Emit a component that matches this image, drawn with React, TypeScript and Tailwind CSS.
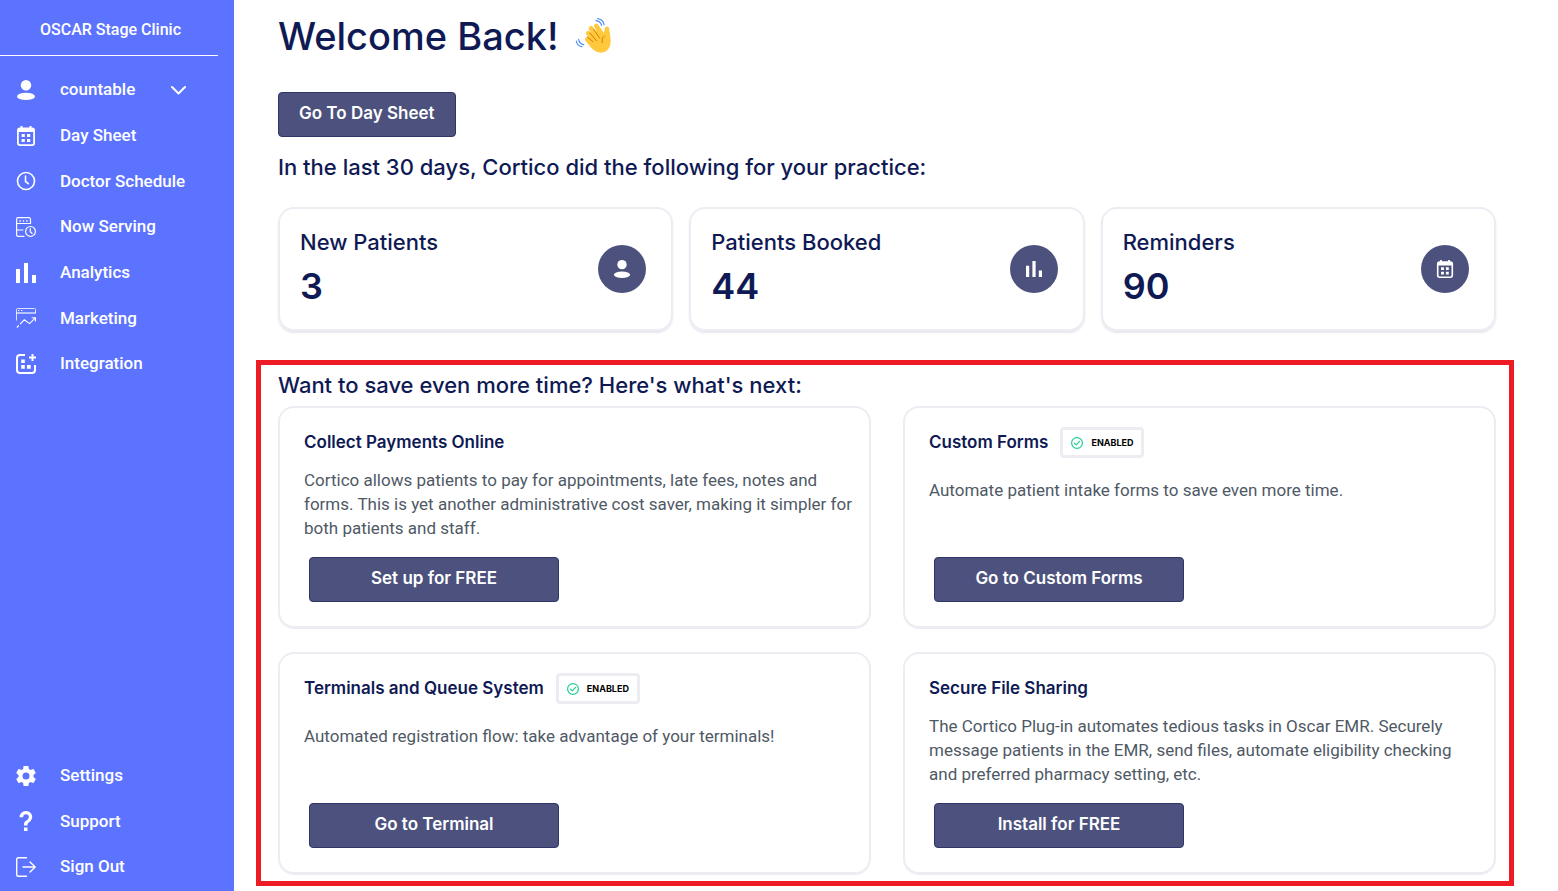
import { ReactNode } from "react"

const PersonIcon = ({ className }: { className: string }) => (
    <svg className={className} viewBox="0 0 20 20" fill="currentColor" aria-hidden="true">
        <circle cx="10" cy="5.2" r="5.2" />
        <ellipse cx="10" cy="16.4" rx="9" ry="3.6" />
    </svg>
)

const CalendarIcon = ({ className }: { className: string }) => (
    <svg className={className} viewBox="0 0 20 20" fill="currentColor" aria-hidden="true">
        <path
            fillRule="evenodd"
            d="M4.500 0h2v1.400h7V0h2v1.400h.500A3 3 0 0 1 19 4.400V17a3 3 0 0 1-3 3H4a3 3 0 0 1-3-3V4.400A3 3 0 0 1 4 1.400h.500zM2.800 6v11a1.300 1.300 0 0 0 1.300 1.300h11.800a1.300 1.300 0 0 0 1.300-1.300V6z"
        />
        <path d="M5.600 8h3.200v3H5.600zM11 8h3.200v3H11zM5.600 13h3.200v3H5.600zM11 13h3.200v3H11z" />
    </svg>
)

const BarsIcon = ({ className }: { className: string }) => (
    <svg className={className} viewBox="0 0 20 20" fill="currentColor" aria-hidden="true">
        <path d="M0 6h4v14H0zM8 0h4v20H8zM16 12h4v8h-4z" />
    </svg>
)

const ClockIcon = ({ className }: { className: string }) => (
    <svg className={className} viewBox="0 0 20 20" fill="none" stroke="currentColor" strokeWidth="1.600" strokeLinecap="round" strokeLinejoin="round" aria-hidden="true">
        <circle cx="10" cy="10" r="8.500" />
        <path d="M9.500 5v5.500l2.800 2.200" />
    </svg>
)

const ServingIcon = ({ className }: { className: string }) => (
    <svg className={className} viewBox="0 0 20 20" fill="none" stroke="currentColor" strokeWidth="1.200" strokeLinecap="round" aria-hidden="true">
        <path d="M14.500 6.500V2.200A1.700 1.700 0 0 0 12.800.600H2.200A1.700 1.700 0 0 0 .600 2.200v15.500a1.700 1.700 0 0 0 1.600 1.700H8M.600 6.500h13.900M.600 13H7" />
        <path d="M3.400 3.900h1.400M6.800 3.900h1.400M10.200 3.900h1.400" strokeWidth="1.500" strokeLinecap="butt" />
        <circle cx="14.500" cy="14.400" r="4.900" />
        <path d="M14.300 11.500v3.200l1.700 1.600" />
    </svg>
)

const MarketingIcon = ({ className }: { className: string }) => (
    <svg className={className} viewBox="0 0 20 20" fill="none" stroke="currentColor" strokeWidth="0.800" aria-hidden="true">
        <path d="M.500 12.500V1.500a1 1 0 0 1 1-1h17a1 1 0 0 1 1 1v4" />
        <path d="M.500 5.500h19M.500 4.500h19" opacity="0.700" />
        <path d="M2 2.500h1.300M5 2.500h1.300" strokeWidth="1" />
        <path d="m.800 19.500 2-2M4 16.200l4.300-4.400 5.300 3.800 5.700-5.700M15.700 9.700h3.700v3.800" strokeWidth="1.100" />
    </svg>
)

const IntegrationIcon = ({ className }: { className: string }) => (
    <svg className={className} viewBox="0 0 20 20" fill="none" stroke="currentColor" strokeWidth="2" aria-hidden="true">
        <path d="M9 1H4a3 3 0 0 0-3 3v12a3 3 0 0 0 3 3h12a3 3 0 0 0 3-3v-5" />
        <path d="M16.500 0v7M13 3.500h7" />
        <path fill="currentColor" stroke="none" d="M5.200 5.500h3.600v3.600H5.200zM5.200 11h3.600v3.700H5.200zM11 11h3.700v3.700H11z" />
    </svg>
)

const SettingsIcon = ({ className }: { className: string }) => (
    <svg className={className} viewBox="2 2 20 20" fill="currentColor" aria-hidden="true">
        <path d="M12 15.500A3.500 3.500 0 0 1 8.500 12 3.500 3.500 0 0 1 12 8.500a3.500 3.500 0 0 1 3.500 3.500 3.500 3.500 0 0 1-3.500 3.500m7.430-2.530c.040-.320.070-.640.070-.970s-.030-.660-.070-1l2.110-1.630c.190-.150.240-.420.120-.640l-2-3.460c-.120-.220-.390-.310-.610-.220l-2.490 1c-.520-.390-1.060-.730-1.690-.980l-.370-2.650A.506.506 0 0 0 14 2h-4c-.250 0-.460.180-.500.420l-.370 2.650c-.630.250-1.170.590-1.690.980l-2.490-1c-.220-.090-.490 0-.610.220l-2 3.460c-.130.220-.070.490.120.640L4.570 11c-.040.340-.070.670-.070 1s.030.650.070.970l-2.110 1.660c-.190.150-.250.420-.120.640l2 3.460c.120.220.390.300.610.220l2.490-1.010c.520.400 1.060.740 1.690.990l.370 2.650c.040.240.250.420.500.420h4c.250 0 .460-.180.500-.420l.370-2.650c.630-.260 1.170-.590 1.690-.990l2.490 1.010c.220.080.490 0 .610-.220l2-3.460c.120-.220.070-.490-.120-.640z" />
    </svg>
)

const HelpIcon = ({ className }: { className: string }) => (
    <svg className={className} viewBox="2 2 20 20" fill="currentColor" aria-hidden="true">
        <path d="M10 18.500h3.500V22H10zM12 2c5.350.220 8 5.620 4.800 9.670-.830 1-2.170 1.660-2.830 2.500-.470.830-.470 1.330-.470 2.330H10c0-1.670 0-2.580.670-3.580.660-1 2-1.590 2.830-2.250C15.920 8.430 15.020 5.560 12 5.300A2.800 2.800 0 0 0 9.200 8.200H5.500A6.300 6.300 0 0 1 12 2" />
    </svg>
)

const SignOutIcon = ({ className }: { className: string }) => (
    <svg className={className} viewBox="0 0 20 20" fill="none" stroke="currentColor" strokeWidth="1.400" strokeLinecap="round" strokeLinejoin="round" aria-hidden="true">
        <path d="M10.500.700H2.200A1.500 1.500 0 0 0 .700 2.200v15.600a1.500 1.500 0 0 0 1.500 1.500h8.300" />
        <path d="M7 10h12M14 5l5.200 5-5.200 5" />
    </svg>
)

const WavingHand = () => (
    <svg className="size-11" viewBox="0 0 132 132" fill="none" strokeLinecap="round" role="img" aria-label="Waving hand">
        <g stroke="#ffc83d" strokeWidth="14">
            <path d="M73 36l24 38M57 43l26 38M49 58l26 30M46 76l24 22" />
            <path d="M105 45c-3 8-3 16-1 26" />
        </g>
        <path d="M98 62l14-14c3 18 5 32 3 42-2 16-14 26-29 26-10 0-20-6-30-16L41 80l30-30 14-8z" fill="#ffc83d" />
        <g stroke="#d67d00" strokeWidth="3">
            <path d="M65 46l18 26M54 57l20 24M46 69l17 14" />
            <path d="M97 66c-7 6-8 13-6 20" />
        </g>
        <g stroke="#4c8df6" strokeWidth="3.500">
            <path d="M77 14c9 1 17 8 19 18M72 20c8 1 14 6 17 14" />
            <path d="M13 81c1 9 8 16 17 17M20 76c1 8 7 14 15 16" />
        </g>
    </svg>
)

const mainLinks = [
    { label: "Day Sheet", icon: <CalendarIcon className="size-5" /> },
    { label: "Doctor Schedule", icon: <ClockIcon className="size-5" /> },
    { label: "Now Serving", icon: <ServingIcon className="size-5" /> },
    { label: "Analytics", icon: <BarsIcon className="size-5" /> },
    { label: "Marketing", icon: <MarketingIcon className="size-5" /> },
    { label: "Integration", icon: <IntegrationIcon className="size-5" /> },
]

const bottomLinks = [
    { label: "Settings", icon: <SettingsIcon className="size-5" /> },
    { label: "Support", icon: <HelpIcon className="size-5" /> },
    { label: "Sign Out", icon: <SignOutIcon className="size-5" /> },
]

const stats = [
    { label: "New Patients", value: 3, icon: <PersonIcon className="size-[18px]" /> },
    { label: "Patients Booked", value: 44, icon: <BarsIcon className="size-4" /> },
    { label: "Reminders", value: 90, icon: <CalendarIcon className="size-[18px]" /> },
]

const features = [
    {
        title: "Collect Payments Online",
        text: "Cortico allows patients to pay for appointments, late fees, notes and forms. This is yet another administrative cost saver, making it simpler for both patients and staff.",
        action: "Set up for FREE",
        enabled: false,
    },
    {
        title: "Custom Forms",
        text: "Automate patient intake forms to save even more time.",
        action: "Go to Custom Forms",
        enabled: true,
    },
    {
        title: "Terminals and Queue System",
        text: "Automated registration flow: take advantage of your terminals!",
        action: "Go to Terminal",
        enabled: true,
    },
    {
        title: "Secure File Sharing",
        text: "The Cortico Plug-in automates tedious tasks in Oscar EMR. Securely message patients in the EMR, send files, automate eligibility checking and preferred pharmacy setting, etc.",
        action: "Install for FREE",
        enabled: false,
    },
]

const NavLink = ({ label, icon }: { label: string; icon: ReactNode }) => (
    <a href="#" className="flex items-center gap-6 pl-4">
        {icon}
        {label}
    </a>
)

const Sidebar = () => (
    <aside className="flex w-[234px] shrink-0 flex-col bg-[#5c73ff] font-['Roboto',sans-serif] text-[17px] font-medium text-white">
        <div className="mr-4 border-b border-white pt-4 pb-3 pl-10 text-base leading-[27px]">OSCAR Stage Clinic</div>
        <nav className="mt-[11px] grid h-80 grid-rows-7">
            <button type="button" className="flex items-center pl-4 text-left">
                <PersonIcon className="mr-6 size-5" />
                <span className="w-[110px]">countable</span>
                <svg className="size-4" viewBox="0 0 16 16" fill="none" stroke="currentColor" strokeWidth="2" strokeLinecap="round" strokeLinejoin="round" aria-hidden="true">
                    <path d="M2 5l6.500 6.500L15 5" />
                </svg>
            </button>
            {mainLinks.map((link) => (
                <NavLink key={link.label} {...link} />
            ))}
        </nav>
        <nav className="mt-auto mb-px grid h-[137px] grid-rows-3">
            {bottomLinks.map((link) => (
                <NavLink key={link.label} {...link} />
            ))}
        </nav>
    </aside>
)

const EnabledBadge = () => (
    <span className="flex h-[31px] items-center gap-2 rounded border-3 border-[#ecedf3] px-2 text-[9px] font-bold text-black">
        <svg className="size-3" viewBox="0 0 12 12" fill="none" stroke="#1fce93" strokeLinecap="round" strokeLinejoin="round" aria-hidden="true">
            <circle cx="6" cy="6" r="5.400" strokeWidth="1.200" />
            <path d="M3.500 6.200l1.800 1.700 3.300-3.500" strokeWidth="1.200" />
        </svg>
        ENABLED
    </span>
)

const App = () => {
    return (
        <div className="flex min-h-screen bg-white font-['Inter',sans-serif] text-[#0f1a54]">
            <Sidebar />
            <main className="flex-1 pt-3 pr-11 pb-[5px] pl-[22px]">
                <div className="pr-[18px] pl-[22px]">
                    <div className="flex h-12 items-center gap-3.5">
                        <h1 className="text-[38px] font-medium">Welcome Back!</h1>
                        <WavingHand />
                    </div>
                    <button
                        type="button"
                        className="mt-8 block h-[45px] rounded border border-[#2f3567] bg-[#4c527d] px-5 pb-px text-[17px] font-semibold text-white"
                    >
                        Go To Day Sheet
                    </button>
                    <h2 className="mt-3.5 text-[22px] leading-8 font-medium">
                        In the last 30 days, Cortico did the following for your practice:
                    </h2>
                    <div className="mt-6 grid grid-cols-3 gap-4">
                        {stats.map((stat) => (
                            <div
                                key={stat.label}
                                className="flex h-[124px] items-center justify-between rounded-2xl border-2 border-[#ecedf3] pr-[25px] pl-5 shadow-[0_2px_2px_#e6e7ee]"
                            >
                                <div className="pb-1">
                                    <h3 className="text-[22px] leading-8 font-medium">{stat.label}</h3>
                                    <p className="mt-1.5 text-[36px] leading-11 font-semibold">{stat.value}</p>
                                </div>
                                <div className="flex size-12 items-center justify-center rounded-full bg-[#4c527d] text-white">
                                    {stat.icon}
                                </div>
                            </div>
                        ))}
                    </div>
                </div>

                <section className="mt-[29px] border-5 border-[#ed1c24] pt-1 pr-[13px] pb-[7px] pl-[17px]">
                    <h2 className="text-[22px] leading-8 font-medium">Want to save even more time? Here's what's next:</h2>
                    <div className="mt-[5px] grid auto-rows-fr grid-cols-2 gap-x-8 gap-y-6">
                        {features.map((feature) => (
                            <article
                                key={feature.title}
                                className="flex flex-col rounded-2xl border-2 border-[#ecedf3] pt-[19px] pr-3.5 pb-6 pl-6 shadow-[0_1px_0_#ecedf3]"
                            >
                                <div className="flex h-[31px] items-center gap-3">
                                    <h3 className="text-[17px] font-semibold">{feature.title}</h3>
                                    {feature.enabled && <EnabledBadge />}
                                </div>
                                <p
                                    className={`font-['Roboto',sans-serif] text-[17px] leading-6 text-[#4f5965] ${feature.enabled ? "mt-5" : "mt-2.5"}`}
                                >
                                    {feature.text}
                                </p>
                                <div className="mt-auto pt-[17px] pl-[5px]">
                                    <button
                                        type="button"
                                        className="block h-[45px] w-[250px] rounded border border-[#2f3567] bg-[#4c527d] pb-px text-[17px] font-semibold text-white"
                                    >
                                        {feature.action}
                                    </button>
                                </div>
                            </article>
                        ))}
                    </div>
                </section>
            </main>
        </div>
    )
}

export default App
